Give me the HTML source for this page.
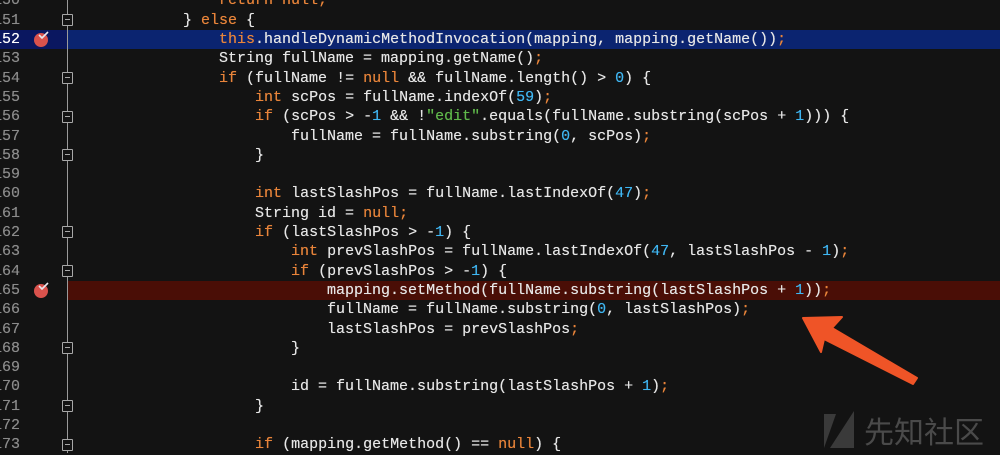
<!DOCTYPE html>
<html><head><meta charset="utf-8"><style>
body{margin:0;width:1000px;height:453px;overflow:hidden;background:#131313;font-family:"Liberation Mono",monospace;font-size:15px;color:#e6e6e6;position:relative}
.l{position:absolute;left:0;width:1000px;height:19.3px;line-height:19.3px;white-space:pre;text-shadow:0 0 0.4px currentColor}
.n{position:absolute;right:980px;color:#8b8b8b}
.c{position:absolute;left:39px}
.k{color:#e8843a}.d{color:#3fb6f2}.s{color:#5fb84a}
.hb{position:absolute;left:68px;width:932px;height:19.3px}
.fl{position:absolute;left:66.5px;top:0;width:1.5px;height:453px;background:#9a9a9a}
.fm{position:absolute;left:62px;width:9px;height:10px;border:1.3px solid #a8a8a8;background:#131313;border-radius:1px}
.fm::after{content:"";position:absolute;left:2px;top:4px;width:5px;height:1.3px;background:#a8a8a8}
.bp{position:absolute;left:34px;width:14px;height:14px;border-radius:50%;background:#d9524c}
</style></head><body>
<div class="hb" style="top:30px;background:#0b2470"></div>
<div style="position:absolute;left:0;top:30px;width:68px;height:19.3px;background:#0a1760"></div>
<div class="hb" style="top:281px;background:#4a0e06"></div>
<div class="fl"></div>

<div class="l" style="top:-8.6px"><span class="n">150</span><span class="c">                    <span class="k">return null;</span></span></div>
<div class="l" style="top:10.7px"><span class="n">151</span><span class="c">                } <span class="k">else</span> {</span></div>
<div class="l" style="top:30px"><span class="n" style="color:#fff">152</span><span class="c">                    <span class="k">this</span>.handleDynamicMethodInvocation(mapping, mapping.getName())<span class="k">;</span></span></div>
<div class="l" style="top:49.3px"><span class="n">153</span><span class="c">                    String fullName = mapping.getName()<span class="k">;</span></span></div>
<div class="l" style="top:68.6px"><span class="n">154</span><span class="c">                    <span class="k">if</span> (fullName != <span class="k">null</span> &amp;&amp; fullName.length() &gt; <span class="d">0</span>) {</span></div>
<div class="l" style="top:87.9px"><span class="n">155</span><span class="c">                        <span class="k">int</span> scPos = fullName.indexOf(<span class="d">59</span>)<span class="k">;</span></span></div>
<div class="l" style="top:107.2px"><span class="n">156</span><span class="c">                        <span class="k">if</span> (scPos &gt; -<span class="d">1</span> &amp;&amp; !<span class="s">"edit"</span>.equals(fullName.substring(scPos + <span class="d">1</span>))) {</span></div>
<div class="l" style="top:126.5px"><span class="n">157</span><span class="c">                            fullName = fullName.substring(<span class="d">0</span>, scPos)<span class="k">;</span></span></div>
<div class="l" style="top:145.8px"><span class="n">158</span><span class="c">                        }</span></div>
<div class="l" style="top:165.1px"><span class="n">159</span></div>
<div class="l" style="top:184.4px"><span class="n">160</span><span class="c">                        <span class="k">int</span> lastSlashPos = fullName.lastIndexOf(<span class="d">47</span>)<span class="k">;</span></span></div>
<div class="l" style="top:203.7px"><span class="n">161</span><span class="c">                        String id = <span class="k">null;</span></span></div>
<div class="l" style="top:223px"><span class="n">162</span><span class="c">                        <span class="k">if</span> (lastSlashPos &gt; -<span class="d">1</span>) {</span></div>
<div class="l" style="top:242.3px"><span class="n">163</span><span class="c">                            <span class="k">int</span> prevSlashPos = fullName.lastIndexOf(<span class="d">47</span>, lastSlashPos - <span class="d">1</span>)<span class="k">;</span></span></div>
<div class="l" style="top:261.6px"><span class="n">164</span><span class="c">                            <span class="k">if</span> (prevSlashPos &gt; -<span class="d">1</span>) {</span></div>
<div class="l" style="top:280.9px"><span class="n">165</span><span class="c">                                mapping.setMethod(fullName.substring(lastSlashPos + <span class="d">1</span>))<span class="k">;</span></span></div>
<div class="l" style="top:300.2px"><span class="n">166</span><span class="c">                                fullName = fullName.substring(<span class="d">0</span>, lastSlashPos)<span class="k">;</span></span></div>
<div class="l" style="top:319.5px"><span class="n">167</span><span class="c">                                lastSlashPos = prevSlashPos<span class="k">;</span></span></div>
<div class="l" style="top:338.8px"><span class="n">168</span><span class="c">                            }</span></div>
<div class="l" style="top:358.1px"><span class="n">169</span></div>
<div class="l" style="top:377.4px"><span class="n">170</span><span class="c">                            id = fullName.substring(lastSlashPos + <span class="d">1</span>)<span class="k">;</span></span></div>
<div class="l" style="top:396.7px"><span class="n">171</span><span class="c">                        }</span></div>
<div class="l" style="top:416px"><span class="n">172</span></div>
<div class="l" style="top:435.3px"><span class="n">173</span><span class="c">                        <span class="k">if</span> (mapping.getMethod() == <span class="k">null</span>) {</span></div>

<div class="fm" style="top:14px"></div>
<div class="fm" style="top:72px"></div>
<div class="fm" style="top:111px"></div>
<div class="fm" style="top:149px"></div>
<div class="fm" style="top:226px"></div>
<div class="fm" style="top:265px"></div>
<div class="fm" style="top:342px"></div>
<div class="fm" style="top:400px"></div>
<div class="fm" style="top:439px"></div>

<div class="bp" style="top:33px"></div>
<div class="bp" style="top:284px"></div>
<svg style="position:absolute;left:0;top:0" width="1000" height="453">
<path d="M39 35 l3 3 l6 -6" stroke="#e8e8f0" stroke-width="1.6" fill="none"/>
<path d="M39 286 l3 3 l6 -6" stroke="#e8e8f0" stroke-width="1.6" fill="none"/>
<polygon points="803,318 842,317 832,328 917,378 913,384 824,339 821,352" fill="#ef5427" stroke="#ef5427" stroke-width="2" stroke-linejoin="round"/>
<polygon points="824,414 836,414 824,448" fill="#3a3a3a"/>
<polygon points="854,411 854,448 830,448" fill="#3a3a3a"/>
</svg>
<div style="position:absolute;left:864px;top:412px;font-family:'Noto Sans CJK SC',sans-serif;font-size:30px;line-height:36px;color:#4a4a4a">先知社区</div>
</body></html>
